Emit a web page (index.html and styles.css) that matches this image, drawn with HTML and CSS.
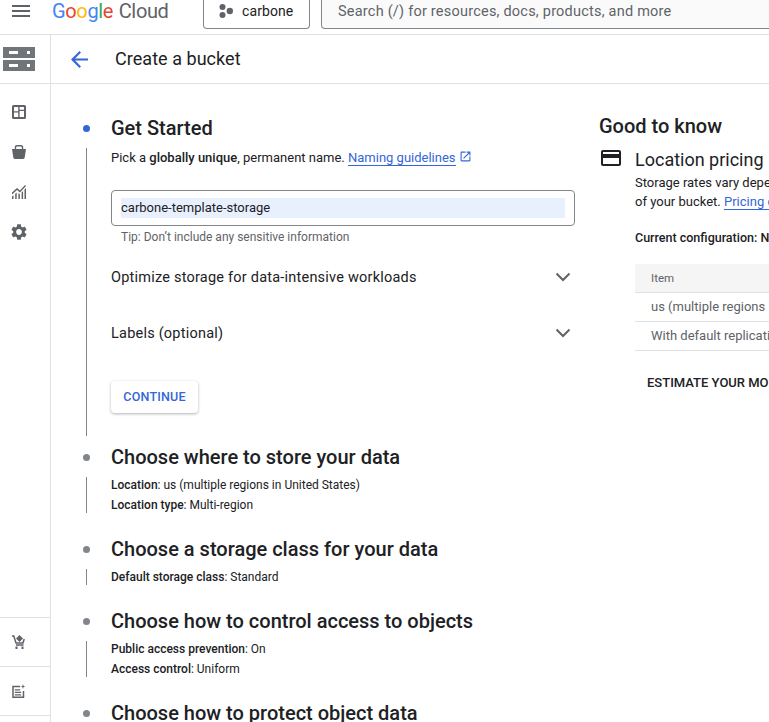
FILE: index.html
```html
<!DOCTYPE html>
<html lang="en">
<head>
<meta charset="utf-8">
<title>Create a bucket</title>
<link rel="stylesheet" href="styles.css">
</head>
<body>
<header class="topbar">
  <div class="menu"><span></span><span></span><span></span></div>
  <div class="logo"><span class="g-blue">G</span><span class="g-red">o</span><span class="g-yellow">o</span><span class="g-blue">g</span><span class="g-green">l</span><span class="g-red">e</span> <span class="g-cloud">Cloud</span></div>
  <div class="project">
    <svg class="project-icon" viewBox="0 0 14 14"><circle cx="3.500" cy="3" r="3"/><circle cx="3.500" cy="11" r="3"/><circle cx="10.800" cy="7" r="3.200"/></svg>
    <span>carbone</span>
  </div>
  <div class="search">Search (/) for resources, docs, products, and more</div>
</header>
<div class="layout">
  <nav class="sidebar">
    <div class="side-top">
      <svg class="storage-icon" viewBox="0 0 32 24">
        <path class="ic-storage" d="M0 0h32v11H0zM0 13h32v11H0z"/>
        <path class="ic-w" d="M6 4h9v3H6zM24 4h3v3h-3zM6 17h9v3H6zM24 17h3v3h-3z"/>
      </svg>
    </div>
    <div class="side-nav">
      <div class="side-item"><svg class="icon14" viewBox="0 0 14 14"><path class="ic" fill-rule="evenodd" d="M1.500 0h11A1.500 1.500 0 0 1 14 1.500v11a1.500 1.500 0 0 1-1.500 1.500h-11A1.500 1.500 0 0 1 0 12.500v-11A1.500 1.500 0 0 1 1.500 0zM2 2v4.200h4.200V2zM2 7.400V12h4.200V7.400zM7.600 2v2.800H12V2zM7.600 6V12H12V6z"/></svg></div>
      <div class="side-item"><svg class="icon14" viewBox="0 0 14 14"><path class="ic" fill-rule="evenodd" d="M2.800 4V2.200C2.800.9 3.700 0 5 0h4c1.300 0 2.200.9 2.200 2.200V4H14l-1.300 8.600c-.1.900-.8 1.400-1.600 1.400H2.900c-.8 0-1.500-.5-1.600-1.400L0 4zM4.200 4h5.600V2.200c0-.5-.3-.8-.8-.8H5c-.5 0-.8.300-.8.800z"/></svg></div>
      <div class="side-item"><svg class="icon14" viewBox="0 0 14 14"><path class="ic" d="M0 7.600 5 3l3 2.600L13 0l1 1-6 6.600-3-2.600-5 4.400zM0 11.500l1.500-1.300V14H0zM3.200 8.800l1.500-1.200V14H3.200zM6.400 8l1.500 1.200V14H6.400zM9.600 7.600l1.500-1.700V14H9.600zM12.500 4.500 14 3v11h-1.500z"/></svg></div>
      <div class="side-item"><svg class="icon16" viewBox="2 2 20 20"><path class="ic" d="M19.140 12.940c.04-.3.06-.61.06-.94 0-.32-.02-.64-.07-.94l2.030-1.580c.18-.14.23-.41.12-.61l-1.920-3.320c-.12-.22-.37-.29-.59-.22l-2.390.96c-.5-.38-1.030-.7-1.620-.94l-.36-2.540c-.04-.24-.24-.41-.48-.41h-3.840c-.24 0-.43.17-.47.41l-.36 2.540c-.59.24-1.130.57-1.620.94l-2.390-.96c-.22-.08-.47 0-.59.22L2.740 8.870c-.12.21-.08.47.12.61l2.030 1.580c-.05.3-.09.63-.09.94s.02.64.07.94l-2.030 1.580c-.18.14-.23.41-.12.61l1.920 3.320c.12.22.37.29.59.22l2.390-.96c.5.38 1.030.7 1.620.94l.36 2.540c.05.24.24.41.48.41h3.840c.24 0 .44-.17.47-.41l.36-2.540c.59-.24 1.130-.56 1.620-.94l2.390.96c.22.08.47 0 .59-.22l1.920-3.320c.12-.22.07-.47-.12-.61l-2.010-1.580zM12 15.600c-1.980 0-3.600-1.620-3.600-3.600s1.620-3.600 3.600-3.600 3.600 1.620 3.600 3.600-1.620 3.600-3.600 3.600z"/></svg></div>
    </div>
    <div class="side-foot">
      <div class="foot-item"><svg class="icon14" viewBox="0 0 14 14"><path class="ic-line" d="M0 1h1.800l2.200 7h7l1.200-4M4 10h7.500"/><path class="ic" d="M7.500 0l3.500 3.500-3.500 3.500-3.500-3.500zM3.500 11.500h2V14h-2zM9.500 11.500h2V14h-2z"/></svg></div>
      <div class="foot-item"><svg class="icon14" viewBox="0 0 14 14"><path class="ic-line" d="M8 2.500H1v10.800h10.500V7"/><path class="ic" d="M2.800 5.200h5.400v1.200H2.800zM2.800 7.800h6.400V9H2.800zM2.800 10.300h6.400v1.200H2.800zM11 0l.6 1.900 1.900.6-1.900.6-.6 1.900-.6-1.900-1.900-.6 1.900-.6z"/></svg></div>
      <div class="foot-end"></div>
    </div>
  </nav>
  <main class="content">
    <div class="subheader">
      <svg class="back" viewBox="4 4 16 16"><path d="M20 11H7.830l5.590-5.590L12 4l-8 8 8 8 1.410-1.410L7.830 13H20v-2z"/></svg>
      <h1 class="page-title">Create a bucket</h1>
    </div>
    <div class="columns">
      <section class="stepper">
        <div class="step step-first">
          <div class="step-head"><span class="dot dot-active"></span><h2 class="step-title">Get Started</h2></div>
          <div class="step-body">
            <p class="intro">Pick a <b>globally unique</b>, permanent name. <a class="link">Naming guidelines</a><svg class="ext" viewBox="2 2 20 20"><path d="M19 19H5V5h7V3H5c-1.110 0-2 .9-2 2v14c0 1.100.89 2 2 2h14c1.100 0 2-.9 2-2v-7h-2v7zM14 3v2h3.590l-9.830 9.830 1.410 1.410L19 6.410V10h2V3h-7z"/></svg></p>
            <div class="input"><span class="input-value">carbone-template-storage</span></div>
            <p class="tip">Tip: Don’t include any sensitive information</p>
            <div class="expander expander-first"><span>Optimize storage for data-intensive workloads</span><svg class="chev" viewBox="0 0 16 10"><path d="M1.500 1.500 8 8l6.500-6.500"/></svg></div>
            <div class="expander expander-second"><span>Labels (optional)</span><svg class="chev" viewBox="0 0 16 10"><path d="M1.500 1.500 8 8l6.500-6.500"/></svg></div>
            <button class="continue">CONTINUE</button>
          </div>
        </div>
        <div class="step">
          <div class="step-head"><span class="dot"></span><h2 class="step-title">Choose where to store your data</h2></div>
          <div class="step-body summary">
            <p><b>Location</b>: us (multiple regions in United States)</p>
            <p><b>Location type</b>: Multi-region</p>
          </div>
        </div>
        <div class="step">
          <div class="step-head"><span class="dot"></span><h2 class="step-title">Choose a storage class for your data</h2></div>
          <div class="step-body summary">
            <p><b>Default storage class</b>: Standard</p>
          </div>
        </div>
        <div class="step">
          <div class="step-head"><span class="dot"></span><h2 class="step-title">Choose how to control access to objects</h2></div>
          <div class="step-body summary">
            <p><b>Public access prevention</b>: On</p>
            <p><b>Access control</b>: Uniform</p>
          </div>
        </div>
        <div class="step">
          <div class="step-head"><span class="dot"></span><h2 class="step-title">Choose how to protect object data</h2></div>
        </div>
      </section>
      <aside class="know">
        <h2 class="know-title">Good to know</h2>
        <div class="pricing">
          <svg class="card" viewBox="2 4 20 16"><path d="M20 4H4c-1.110 0-1.990.89-1.990 2L2 18c0 1.110.89 2 2 2h16c1.110 0 2-.89 2-2V6c0-1.110-.89-2-2-2zm0 14H4v-6h16v6zm0-10H4V6h16v2z"/></svg>
          <div class="pricing-main">
            <h3 class="pricing-title">Location pricing</h3>
            <p class="pricing-text">Storage rates vary depending on the storage class</p>
            <p class="pricing-text">of your bucket. <a class="link">Pricing details</a></p>
            <p class="config">Current configuration: New bucket</p>
            <div class="table">
              <div class="tr th">Item</div>
              <div class="tr">us (multiple regions in United States)</div>
              <div class="tr">With default replication</div>
            </div>
            <div class="estimate">ESTIMATE YOUR MONTHLY COST</div>
          </div>
        </div>
      </aside>
    </div>
  </main>
</div>
</body>
</html>
```
FILE: styles.css
```css
* { box-sizing: border-box; }
html, body { margin: 0; padding: 0; }
body {
  width: 769px;
  height: 722px;
  overflow: hidden;
  background: #fff;
  color: #202124;
  font-family: Roboto, "Liberation Sans", sans-serif;
  display: flex;
  flex-direction: column;
}
h1, h2, h3, p { margin: 0; font-weight: 400; }
b { font-weight: 500; }

.topbar {
  flex: none;
  height: 35px;
  border-bottom: 1px solid #dfe1e5;
  display: flex;
  align-items: flex-start;
  padding-left: 12px;
}
.menu {
  width: 18px;
  height: 22px;
  display: flex;
  flex-direction: column;
  justify-content: center;
  gap: 3px;
}
.menu span { display: block; height: 2px; background: #5f6368; }
.logo {
  margin-left: 22px;
  width: 151px;
  height: 22px;
  line-height: 22px;
  font-size: 20px;
  letter-spacing: -.35px;
  white-space: nowrap;
}
.g-blue { color: #4285f4; }
.g-red { color: #ea4335; }
.g-yellow { color: #fbbc04; }
.g-green { color: #34a853; }
.g-cloud { color: #5f6368; margin-left: 1px; }
.project {
  width: 107px;
  height: 29px;
  border: 1px solid #80868b;
  border-top: 0;
  border-radius: 0 0 4px 4px;
  display: flex;
  align-items: center;
  padding: 0 0 6px 15px;
  font-size: 14px;
  letter-spacing: .1px;
}
.project-icon { width: 14px; height: 14px; fill: #5f6368; margin-right: 9px; }
.search {
  margin-left: 11px;
  flex: 1;
  height: 29px;
  background: #fafafa;
  border: 1px solid #80868b;
  border-top: 0;
  border-right: 0;
  border-radius: 0 0 0 4px;
  padding-left: 16px;
  line-height: 23px;
  font-size: 14.500px;
  letter-spacing: .22px;
  color: #5f6368;
  white-space: nowrap;
}

.layout { flex: 1; display: flex; min-height: 0; }
.sidebar {
  flex: none;
  width: 51px;
  border-right: 1px solid #dfe1e5;
  display: flex;
  flex-direction: column;
}
.side-top {
  height: 49px;
  border-bottom: 1px solid #dfe1e5;
  padding: 12px 0 0 3px;
}
.storage-icon { display: block; width: 32px; height: 24px; }
.ic { fill: #5f6368; }
.ic-storage { fill: #70757a; }
.ic-w { fill: #fff; }
.ic-line { fill: none; stroke: #5f6368; stroke-width: 1.500; }
.side-nav { padding-top: 8px; }
.side-item {
  height: 40px;
  width: 38px;
  display: flex;
  align-items: center;
  justify-content: center;
}
.icon14 { width: 14px; height: 14px; display: block; }
.icon16 { width: 16px; height: 16px; display: block; }
.side-foot { margin-top: auto; }
.foot-item {
  height: 49px;
  width: 100%;
  border-top: 1px solid #dfe1e5;
  display: flex;
  align-items: center;
  padding-left: 12px;
}
.foot-end { height: 7px; border-top: 1px solid #dfe1e5; }

.content { flex: 1; min-width: 0; display: flex; flex-direction: column; }
.subheader {
  flex: none;
  height: 49px;
  border-bottom: 1px solid #dfe1e5;
  display: flex;
  align-items: center;
  padding-left: 20px;
}
.back { width: 17px; height: 17px; fill: #3367d6; }
.page-title {
  margin-left: 27px;
  font-size: 18px;
  line-height: 22px;
  letter-spacing: .04px;
}
.columns { flex: 1; display: flex; overflow: hidden; }

.stepper { flex: none; width: 548px; padding: 30px 0 0 32px; }
.step { margin-bottom: 22px; }
.step-first { margin-bottom: 7px; }
.step-head { height: 28px; display: flex; align-items: center; gap: 21px; }
.dot { flex: none; width: 7px; height: 7px; border-radius: 50%; background: #80868b; }
.dot-active { background: #3367d6; }
.step-title {
  font-size: 20px;
  font-weight: 500;
  line-height: 28px;
  white-space: nowrap;
}
.step-body {
  margin: 6px 0 0 3px;
  border-left: 1px solid #80868b;
  padding-left: 24px;
}
.step-first .step-body { padding-bottom: 23px; }
.intro { font-size: 13px; line-height: 20px; white-space: nowrap; }
.link {
  color: #3367d6;
  border-bottom: 1px solid #3367d6;
}
.ext { width: 11px; height: 11px; fill: #3367d6; margin-left: 4px; }
.input {
  margin-top: 22px;
  width: 464px;
  height: 36px;
  border: 1px solid #80868b;
  border-radius: 4px;
  padding: 7px 9px;
}
.input-value {
  display: block;
  height: 20px;
  line-height: 20px;
  background: #e8f0fe;
  font-size: 13px;
}
.tip {
  margin-top: 3px;
  padding-left: 10px;
  font-size: 12px;
  line-height: 16px;
  color: #5f6368;
}
.expander {
  width: 464px;
  height: 24px;
  display: flex;
  align-items: center;
  justify-content: space-between;
  font-size: 14.500px;
  letter-spacing: .22px;
  padding-right: 4px;
}
.expander-first { margin-top: 20px; }
.expander-second { margin-top: 32px; }
.chev { width: 16px; height: 10px; fill: none; stroke: #5f6368; stroke-width: 2; }
.continue {
  display: block;
  margin-top: 36px;
  width: 87px;
  height: 32px;
  border: 0;
  border-radius: 4px;
  background: #fff;
  box-shadow: 0 1px 3px rgba(60,64,67,.4);
  color: #3367d6;
  font-family: inherit;
  font-size: 12.500px;
  font-weight: 500;
  letter-spacing: .2px;
  padding: 0 0 2px;
}
.summary { display: flex; flex-direction: column; gap: 4px; }
.summary p { font-size: 12px; line-height: 16px; white-space: nowrap; }

.know { flex: none; width: 300px; padding-top: 30px; }
.know-title { font-size: 20px; font-weight: 500; line-height: 24px; }
.pricing { margin-top: 12px; display: flex; }
.card { flex: none; width: 20px; height: 16px; fill: #202124; margin-left: 2px; }
.pricing-main { margin-left: 14px; flex: 1; }
.pricing-title { font-size: 18px; line-height: 20px; white-space: nowrap; }
.pricing-text { font-size: 13px; line-height: 19px; white-space: nowrap; }
.pricing-title + .pricing-text { margin-top: 3px; }
.config { margin-top: 17px; font-size: 12.500px; font-weight: 500; line-height: 20px; white-space: nowrap; }
.table { margin-top: 16px; width: 300px; }
.tr {
  height: 29px;
  line-height: 28px;
  border-bottom: 1px solid #dfe1e5;
  padding-left: 16px;
  font-size: 13px;
  color: #5f6368;
  white-space: nowrap;
}
.th { background: #f5f5f5; font-size: 11.500px; }
.estimate {
  margin: 22px 0 0 12px;
  font-size: 13px;
  font-weight: 500;
  line-height: 20px;
  white-space: nowrap;
}
```
